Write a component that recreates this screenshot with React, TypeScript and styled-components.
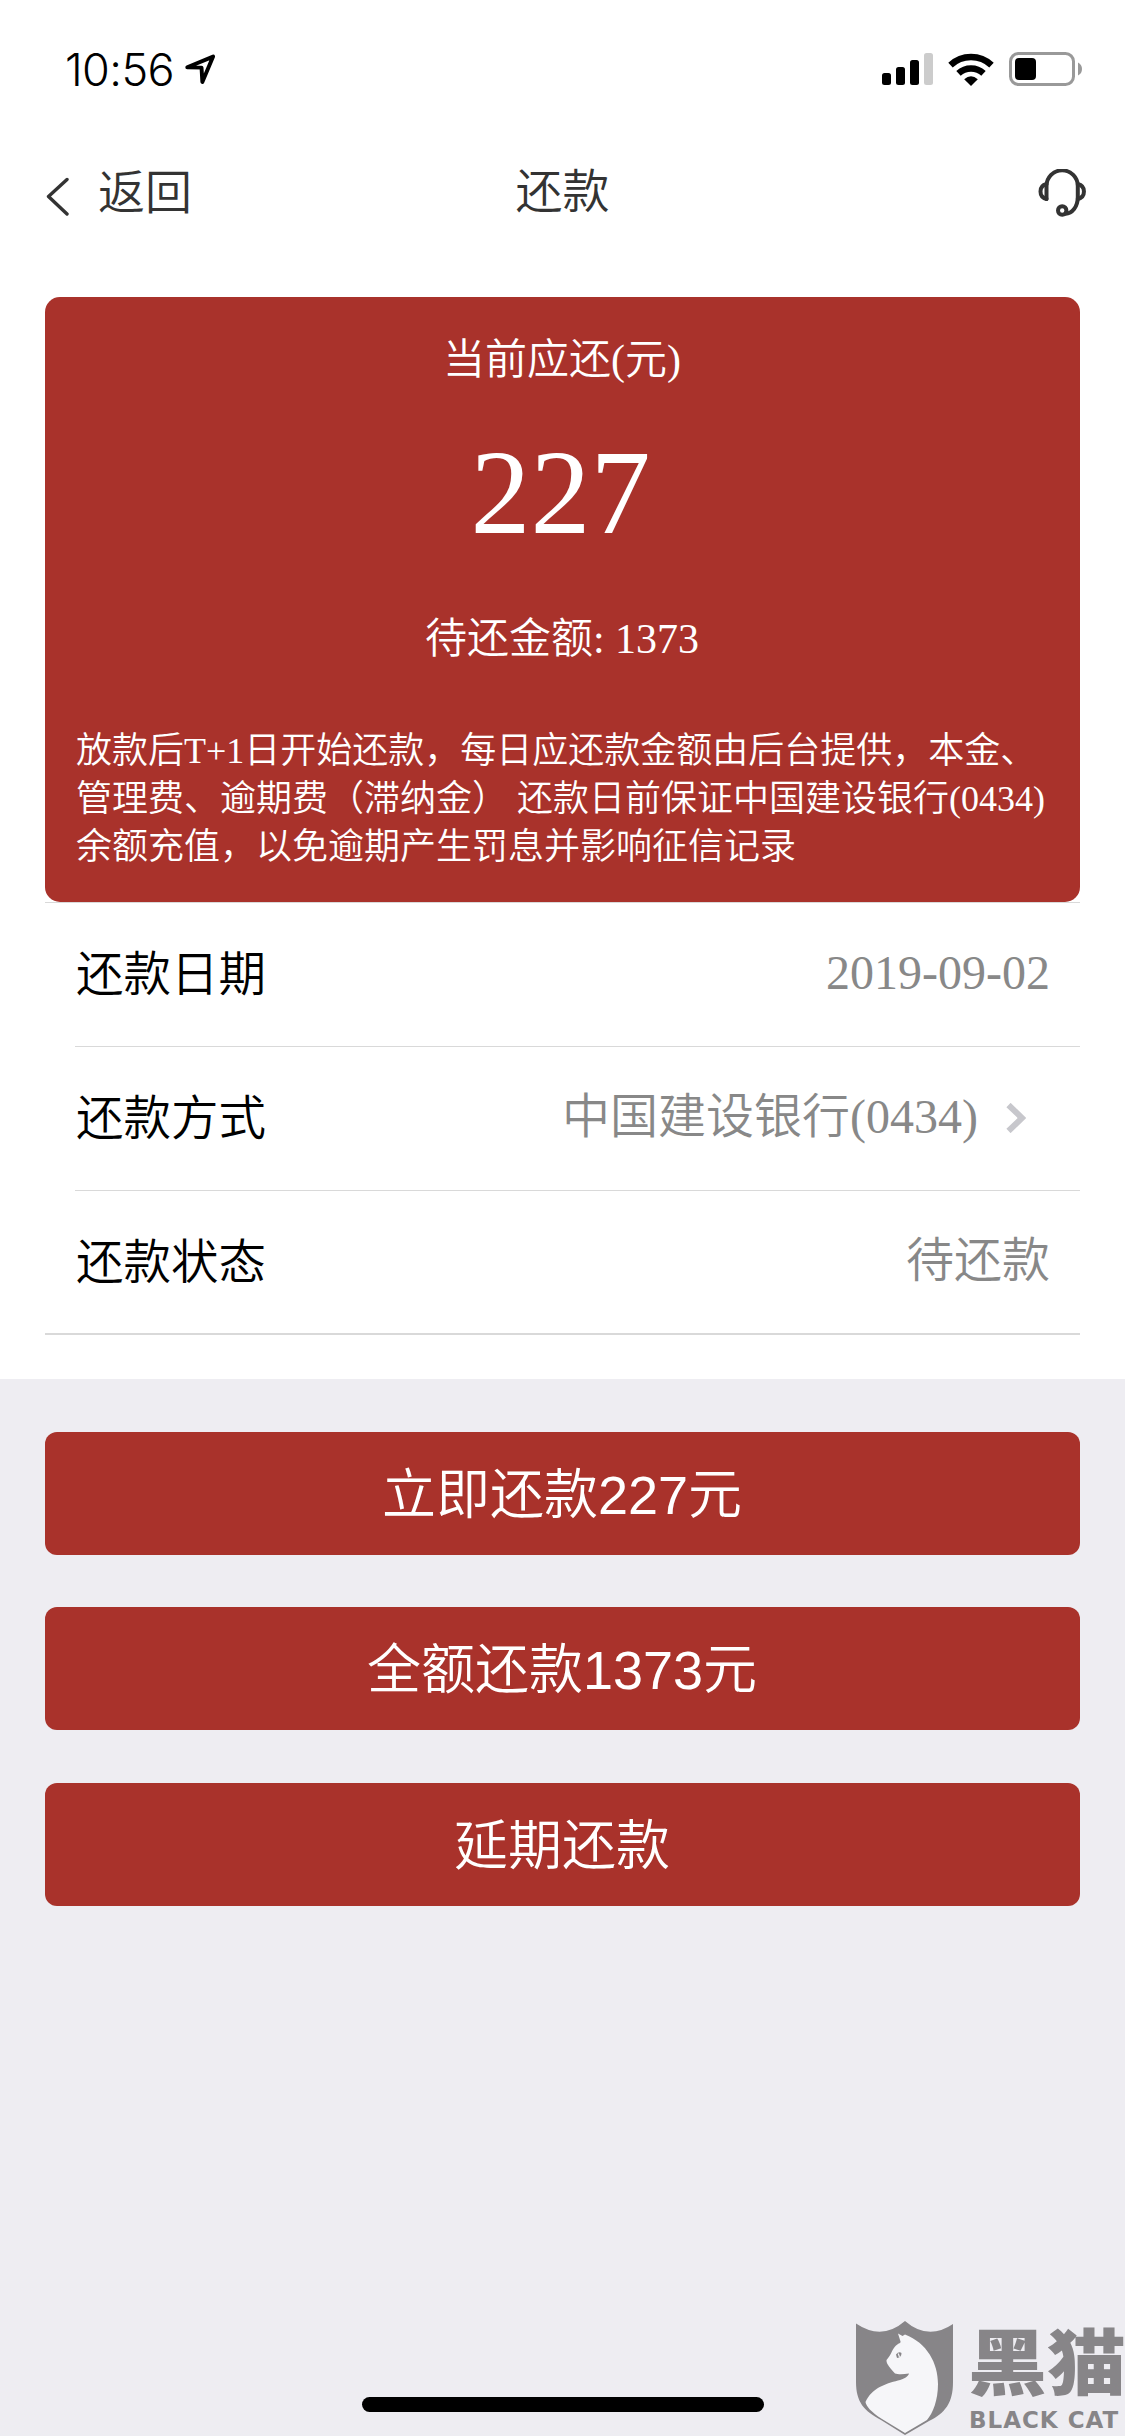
import { ReactNode } from "react";
import styled, { createGlobalStyle } from "styled-components";

const RED = "#a9322b";
const SERIF = `"Liberation Serif", "Noto Sans CJK SC", serif`;
const SANS = `"Liberation Sans", "Noto Sans CJK SC", sans-serif`;

const GlobalStyle = createGlobalStyle`
  * {
    box-sizing: border-box;
  }

  body {
    margin: 0;
    background: #eeedf2;
    font-family: ${SERIF};
  }
`;

const Page = styled.div`
  position: relative;
  display: flex;
  flex-direction: column;
  width: 1125px;
  height: 2436px;
  overflow: hidden;
  background: #eeedf2;
`;

const StatusBar = styled.div`
  display: flex;
  justify-content: space-between;
  align-items: center;
  height: 132px;
  padding: 6px 43px 0 65px;
  background: #ffffff;
`;

const Clock = styled.div`
  display: flex;
  align-items: center;
  gap: 11px;
  color: #000000;
  font-family: Inter, sans-serif;
  font-size: 45px;
  font-weight: 300;
  letter-spacing: -0.6px;
`;

const StatusIcons = styled.div`
  display: flex;
  align-items: center;
  gap: 15px;
`;

const NavBar = styled.div`
  display: grid;
  grid-template-columns: 1fr auto 1fr;
  align-items: center;
  height: 132px;
  padding: 0 38px 12px 38px;
  background: #ffffff;
  color: #333333;
  font-family: ${SANS};
  font-size: 47px;
  font-weight: 350;
  line-height: 60px;
`;

const BackButton = styled.div`
  display: flex;
  align-items: center;
  gap: 29px;
  padding: 2px 0 0 7px;

  svg {
    margin-top: 7px;
  }
`;

const ServiceButton = styled.div`
  display: flex;
  justify-self: end;
  padding-top: 2px;
`;

const Content = styled.div`
  height: 1115px;
  padding: 33px 45px 0;
  background: #ffffff;
`;

const SummaryCard = styled.div`
  display: flex;
  flex-direction: column;
  align-items: center;
  height: 605px;
  padding: 32px 31px 0 30px;
  border-radius: 15px;
  background: ${RED};
  color: #ffffff;
  font-weight: 350;
`;

const SummaryText = styled.div`
  font-size: 42px;
  line-height: 62px;
`;

const Amount = styled.div`
  margin: 31px 3px 44px 0;
  font-size: 120px;
  line-height: 142px;
`;

const Notice = styled.div`
  align-self: stretch;
  margin: 57px 0 0 1px;
  font-size: 36px;
  line-height: 48px;
  white-space: nowrap;
`;

const List = styled.div`
  border-top: 1px solid #d9d9d9;
  border-bottom: 2px solid #d9d9d9;
`;

const Row = styled.div`
  display: flex;
  justify-content: space-between;
  height: 144px;
  margin-left: 30px;
  padding-right: 30px;
  border-bottom: 1px solid #d9d9d9;

  &:last-child {
    height: 142px;
    border-bottom: none;
  }
`;

const Label = styled.div`
  padding-left: 1px;
  color: #000000;
  font-family: ${SANS};
  font-size: 47.5px;
  font-weight: 350;
  line-height: 143px;
`;

const Value = styled.div`
  display: flex;
  color: #888888;
  font-size: 48px;
  font-weight: 350;
  line-height: 140px;

  svg {
    margin: 56px 24px 0 28px;
  }
`;

const Actions = styled.div`
  display: flex;
  flex-direction: column;
  gap: 52px;
  padding: 53px 45px 0;
`;

const ActionButton = styled.button`
  height: 123px;
  padding: 0 1px 6px 0;
  border: none;
  border-radius: 12px;
  background: ${RED};
  color: #ffffff;
  font-family: ${SANS};
  font-size: 54px;
  font-weight: 350;

  &:last-child {
    margin-top: 1px;
  }
`;

const HomeIndicator = styled.div`
  position: absolute;
  left: 362px;
  bottom: 24px;
  width: 402px;
  height: 15px;
  border-radius: 8px;
  background: #000000;
`;

const Watermark = styled.div`
  position: absolute;
  left: 855px;
  top: 2320px;
  display: flex;
  gap: 13px;
  color: #878588;
`;

const WatermarkText = styled.div`
  display: flex;
  flex-direction: column;
  gap: 10px;
  width: 156px;
`;

const WatermarkName = styled.div`
  height: 78px;
  font-family: "Noto Sans CJK SC", sans-serif;
  font-size: 79px;
  font-weight: 900;
  line-height: 76px;
  white-space: nowrap;
  transform: scaleY(0.9);
`;

const WatermarkLatin = styled.div`
  padding-left: 1px;
  font-family: "DejaVu Sans", sans-serif;
  font-size: 23px;
  font-weight: 700;
  line-height: 24px;
  letter-spacing: 1px;
  white-space: nowrap;
`;

const LocationIcon = () => (
  <svg width="31" height="31" viewBox="0 0 30 30" fill="none">
    <path d="M2.2 12.8 27.2 2.5 16.8 27 16 13.2Z" stroke="#000" strokeWidth="3.8" strokeLinejoin="round" />
  </svg>
);

const SignalIcon = () => (
  <svg width="51" height="32" viewBox="0 0 51 32">
    <rect x="0" y="20" width="9" height="12" rx="2.5" />
    <rect x="14" y="14" width="9" height="18" rx="2.5" />
    <rect x="28" y="7" width="9" height="25" rx="2.5" />
    <rect x="42" y="0" width="9" height="32" rx="2.5" fill="#ccc" />
  </svg>
);

const WifiIcon = () => (
  <svg width="46" height="33" viewBox="0 0 46 33">
    <path d="M2.5 12.2A30 30 0 0 1 43.5 12.2" fill="none" stroke="#000" strokeWidth="6.5" />
    <path d="M10.5 20.4A18.5 18.5 0 0 1 35.5 20.4" fill="none" stroke="#000" strokeWidth="6.5" />
    <path d="M16.2 26.2Q23 20.4 29.8 26.2L23 33Z" />
  </svg>
);

const BatteryIcon = () => (
  <svg width="73" height="34" viewBox="0 0 73 34">
    <rect x="1.5" y="1.5" width="63" height="31" rx="8" fill="none" stroke="#999" strokeWidth="3" />
    <rect x="6" y="6" width="21" height="22" rx="4" />
    <path d="M69 10.5Q73 12.5 73 17T69 23.5Z" fill="#999" />
  </svg>
);

const BackIcon = () => (
  <svg width="24" height="40" viewBox="0 0 24 40" fill="none">
    <path d="M22 2.5 3.5 19.5 22 37" stroke="#333" strokeWidth="3.4" strokeLinecap="round" strokeLinejoin="round" />
  </svg>
);

const HeadsetIcon = () => (
  <svg
    width="49"
    height="48"
    viewBox="0 0 49 48"
    fill="none"
    stroke="#333"
    strokeWidth="4"
    strokeLinecap="round"
    strokeLinejoin="round"
  >
    <path d="M8.5 30V17A15.6 15.6 0 0 1 39.8 17V28C39.8 38 34 44.5 27.5 44.8" />
    <path d="M8.5 15C0.5 17 0.5 28 8.5 30" />
    <path d="M39.8 15C48 17 48 28 39.8 30" />
    <circle cx="24.2" cy="41.5" r="4.2" />
  </svg>
);

const ChevronIcon = () => (
  <svg width="20" height="30" viewBox="0 0 20 30" fill="none">
    <path d="M2.5 2 16 15 2.5 28" stroke="#c7c7cc" strokeWidth="6" />
  </svg>
);

const ShieldIcon = () => (
  <svg width="100" height="116" viewBox="0 0 100 116">
    <path
      d="M1 3.5Q27 21 50 1Q73 21 98 4V62C98 83 90 93 74 101L50 115 26 100C9 91 1 82 1 62Z"
      fill="currentColor"
    />
    <path
      d="M43 13.5 47.5 16 50 14.5C72 23 83 43 83 64C83 80 78 93 72 100L50 113 27 99C16 92 11 86 10.5 82C17 68 30 64 43 60.5C49 59 53 57 54 53.5C48 54.5 43 54.5 40 53.5C36 49 31 44 31.5 40C37 34 37 29 41 25.5C44 23 46 23 45.5 21.5Z"
      fill="#f6f6f9"
    />
    <path d="M41 34.5Q44 31 46.5 33Q46.5 37.5 42 38Z" fill="currentColor" />
    <path d="M43.2 33.5 44.5 37" stroke="#f6f6f9" strokeWidth="1.2" />
  </svg>
);

interface InfoRowProps {
  label: string;
  children: ReactNode;
}

const InfoRow = ({ label, children }: InfoRowProps) => (
  <Row>
    <Label>{label}</Label>
    <Value>{children}</Value>
  </Row>
);

const App = () => {
  const actions = ["立即还款227元", "全额还款1373元", "延期还款"];

  return (
    <Page>
      <GlobalStyle />
      <StatusBar>
        <Clock>
          10:56
          <LocationIcon />
        </Clock>
        <StatusIcons>
          <SignalIcon />
          <WifiIcon />
          <BatteryIcon />
        </StatusIcons>
      </StatusBar>
      <NavBar>
        <BackButton>
          <BackIcon />
          返回
        </BackButton>
        <div>还款</div>
        <ServiceButton>
          <HeadsetIcon />
        </ServiceButton>
      </NavBar>
      <Content>
        <SummaryCard>
          <SummaryText>当前应还(元)</SummaryText>
          <Amount>227</Amount>
          <SummaryText>待还金额: 1373</SummaryText>
          <Notice>
            放款后T+1日开始还款，每日应还款金额由后台提供，本金、
            <br />
            管理费、逾期费（滞纳金） 还款日前保证中国建设银行(0434)
            <br />
            余额充值，以免逾期产生罚息并影响征信记录
          </Notice>
        </SummaryCard>
        <List>
          <InfoRow label="还款日期">2019-09-02</InfoRow>
          <InfoRow label="还款方式">
            中国建设银行(0434)
            <ChevronIcon />
          </InfoRow>
          <InfoRow label="还款状态">待还款</InfoRow>
        </List>
      </Content>
      <Actions>
        {actions.map((text) => (
          <ActionButton key={text}>{text}</ActionButton>
        ))}
      </Actions>
      <HomeIndicator />
      <Watermark>
        <ShieldIcon />
        <WatermarkText>
          <WatermarkName>黑猫</WatermarkName>
          <WatermarkLatin>BLACK CAT</WatermarkLatin>
        </WatermarkText>
      </Watermark>
    </Page>
  );
};

export default App;
